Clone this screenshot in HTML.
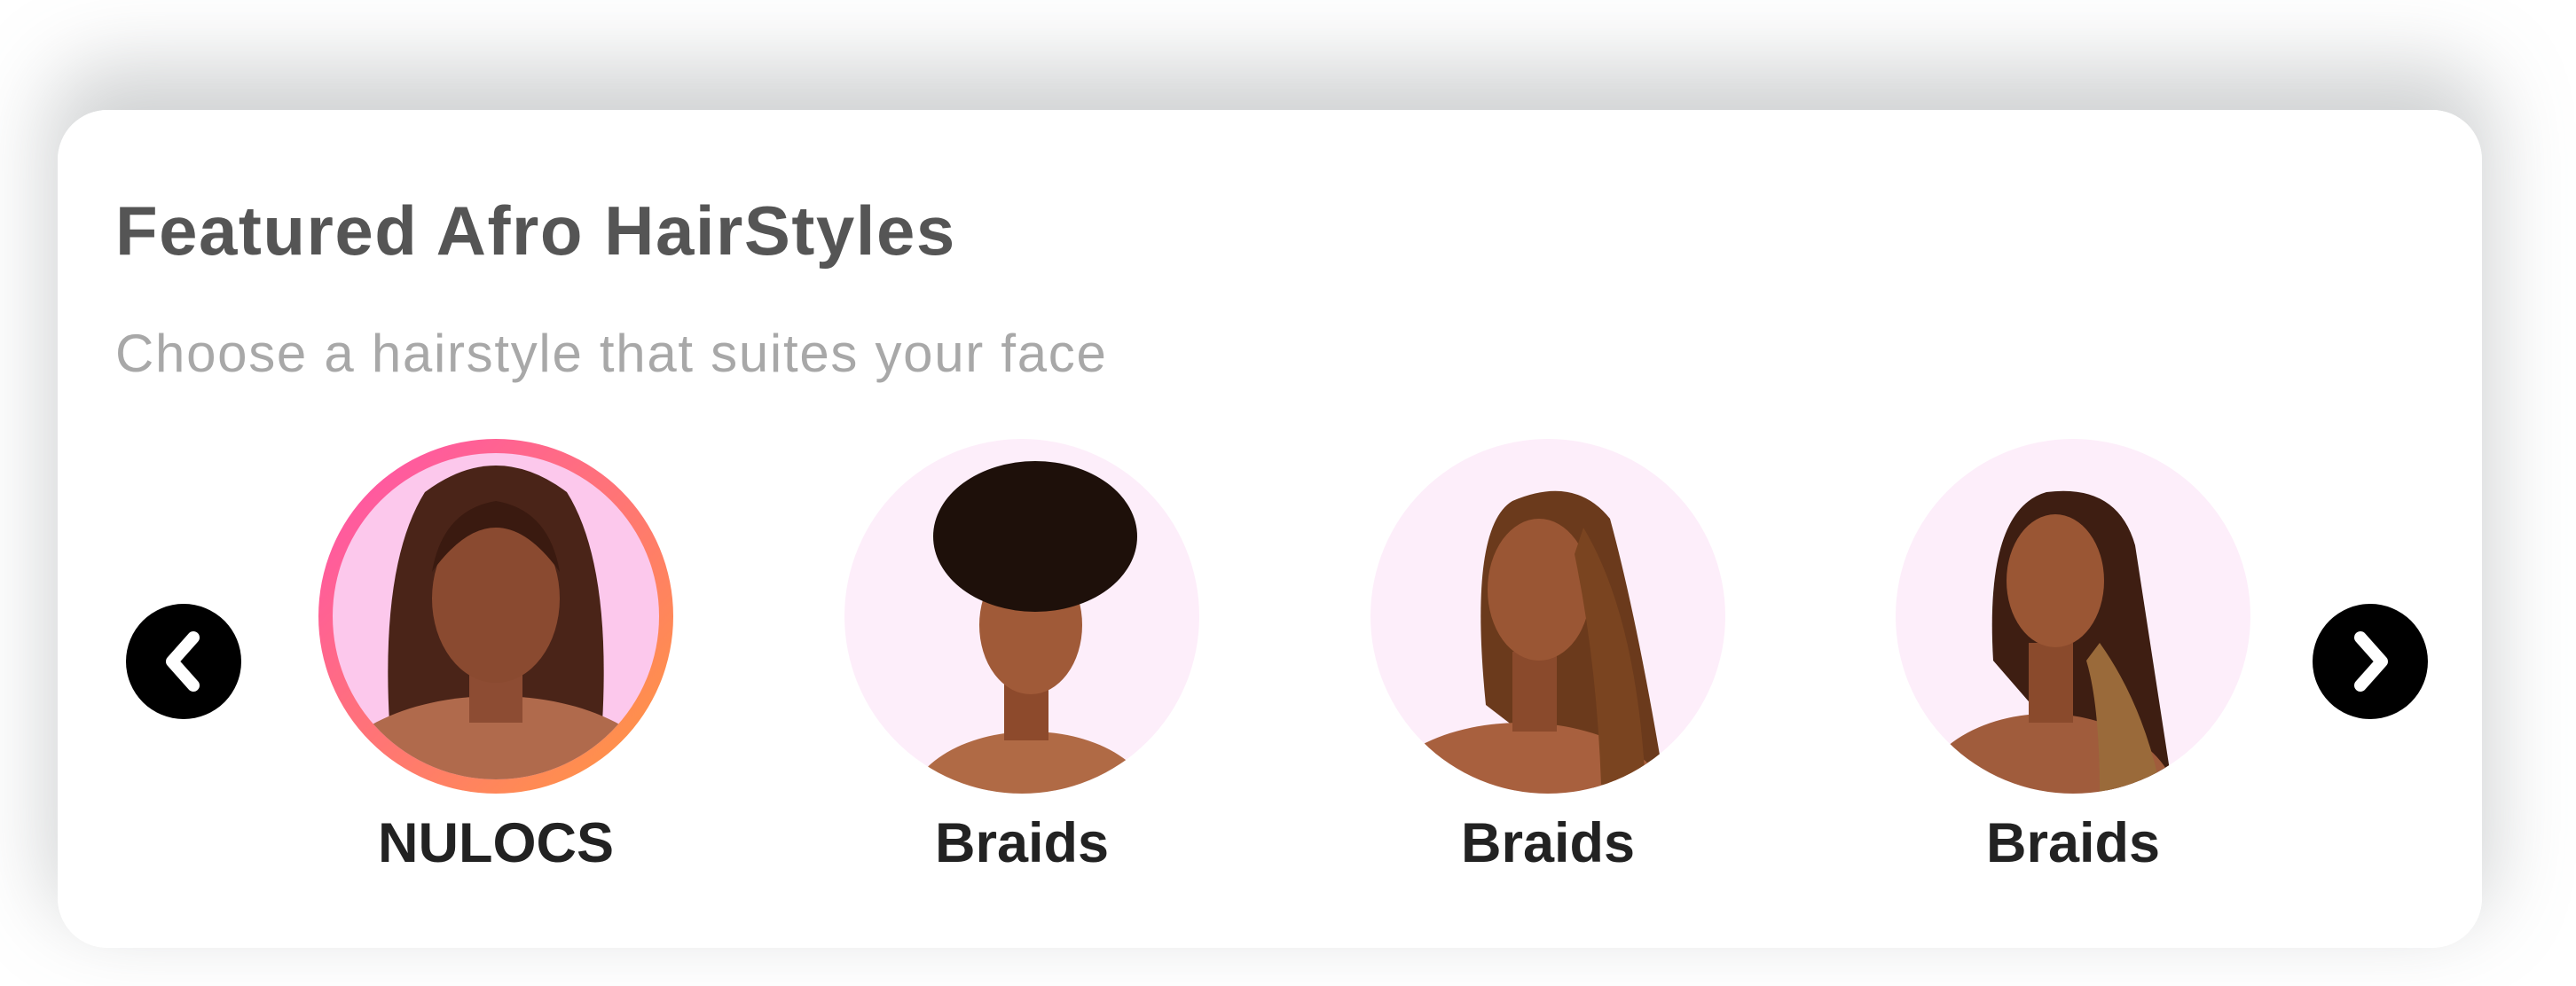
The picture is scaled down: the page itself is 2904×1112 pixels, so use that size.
<!DOCTYPE html>
<html><head><style>
html,body{margin:0;padding:0;width:2904px;height:1112px;background:#fff;overflow:hidden;font-family:"Liberation Sans",sans-serif}
.shadow{position:absolute;left:65px;top:124px;width:2733px;height:945px;border-radius:56px;box-shadow:0 -40px 90px 10px rgba(120,125,130,.35)}
.card{position:absolute;left:65px;top:124px;width:2733px;height:945px;border-radius:56px;background:#fff}
h1{position:absolute;left:130px;top:215px;margin:0;font-size:78px;font-weight:bold;color:#555;letter-spacing:1.5px}
.sub{position:absolute;left:130px;top:364px;font-size:60px;color:#a8a8a8;letter-spacing:1.7px}
.item{position:absolute;top:495px;width:400px;height:400px}
.lbl{position:absolute;top:915px;width:400px;text-align:center;font-size:63px;font-weight:bold;color:#222}
.arrow{position:absolute;top:681px;width:130px;height:130px;border-radius:50%;background:#000}
</style></head><body>
<div class="shadow"></div>
<div class="card"></div>
<h1>Featured Afro HairStyles</h1>
<div class="sub">Choose a hairstyle that suites your face</div>

<div class="arrow" style="left:142px"><svg width="130" height="130"><path d="M76 38 L52 65 L76 92" stroke="#fff" stroke-width="14" fill="none" stroke-linecap="round" stroke-linejoin="round"/></svg></div>
<div class="arrow" style="left:2607px"><svg width="130" height="130"><path d="M54 38 L78 65 L54 92" stroke="#fff" stroke-width="14" fill="none" stroke-linecap="round" stroke-linejoin="round"/></svg></div>

<svg class="item" style="left:359px" viewBox="0 0 400 400">
<defs><linearGradient id="g" x1="0" y1="0" x2="1" y2="1"><stop offset="0" stop-color="#ff4fb0"/><stop offset="1" stop-color="#ff9a3c"/></linearGradient><clipPath id="c1"><circle cx="200" cy="200" r="184"/></clipPath></defs>
<circle cx="200" cy="200" r="200" fill="url(#g)"/>
<circle cx="200" cy="200" r="184" fill="#fcc8ec"/>
<g clip-path="url(#c1)">
<path d="M80 320 Q70 140 120 60 Q200 0 280 60 Q330 140 320 320 Z" fill="#4a2418"/>
<ellipse cx="200" cy="390" rx="190" ry="100" fill="#b06a4c"/>
<rect x="170" y="230" width="60" height="90" fill="#8d4c33"/>
<ellipse cx="200" cy="180" rx="72" ry="95" fill="#8a4a30"/>
<path d="M128 150 Q200 50 272 150 Q260 80 200 70 Q140 80 128 150Z" fill="#3a1a10"/>
</g></svg>
<div class="lbl" style="left:359px">NULOCS</div>

<svg class="item" style="left:952px" viewBox="0 0 400 400">
<defs><clipPath id="c2"><circle cx="200" cy="200" r="200"/></clipPath></defs>
<circle cx="200" cy="200" r="200" fill="#fdeefa"/>
<g clip-path="url(#c2)">
<ellipse cx="210" cy="420" rx="140" ry="90" fill="#b06a45"/>
<rect x="180" y="250" width="50" height="90" fill="#8d4a2c"/>
<ellipse cx="210" cy="210" rx="58" ry="78" fill="#a05a38"/>
<ellipse cx="215" cy="110" rx="115" ry="85" fill="#1e100a"/>
</g></svg>
<div class="lbl" style="left:952px">Braids</div>

<svg class="item" style="left:1545px" viewBox="0 0 400 400">
<defs><clipPath id="c3"><circle cx="200" cy="200" r="200"/></clipPath></defs>
<circle cx="200" cy="200" r="200" fill="#fdeefa"/>
<g clip-path="url(#c3)">
<path d="M130 300 Q110 100 160 70 Q230 40 270 90 Q300 200 330 380 L260 400 Z" fill="#6b3a1c"/>
<ellipse cx="170" cy="420" rx="170" ry="100" fill="#a8603e"/>
<rect x="160" y="240" width="50" height="90" fill="#8a4a2c"/>
<ellipse cx="190" cy="170" rx="58" ry="80" fill="#9a5634"/>
<path d="M240 100 Q300 200 310 390 L260 390 Q255 250 230 130Z" fill="#7a4420"/>
</g></svg>
<div class="lbl" style="left:1545px">Braids</div>

<svg class="item" style="left:2137px" viewBox="0 0 400 400">
<defs><clipPath id="c4"><circle cx="200" cy="200" r="200"/></clipPath></defs>
<circle cx="200" cy="200" r="200" fill="#fdeefa"/>
<g clip-path="url(#c4)">
<path d="M110 250 Q100 80 170 60 Q250 50 270 120 Q290 250 310 380 L240 400 Z" fill="#3e1e12"/>
<ellipse cx="170" cy="420" rx="150" ry="110" fill="#a05c3c"/>
<rect x="150" y="230" width="50" height="90" fill="#8a4a2c"/>
<ellipse cx="180" cy="160" rx="55" ry="75" fill="#9a5634"/>
<path d="M230 230 Q280 300 300 400 L230 400 Q230 300 215 250Z" fill="#9a6a3a"/>
</g></svg>
<div class="lbl" style="left:2137px">Braids</div>
</body></html>
